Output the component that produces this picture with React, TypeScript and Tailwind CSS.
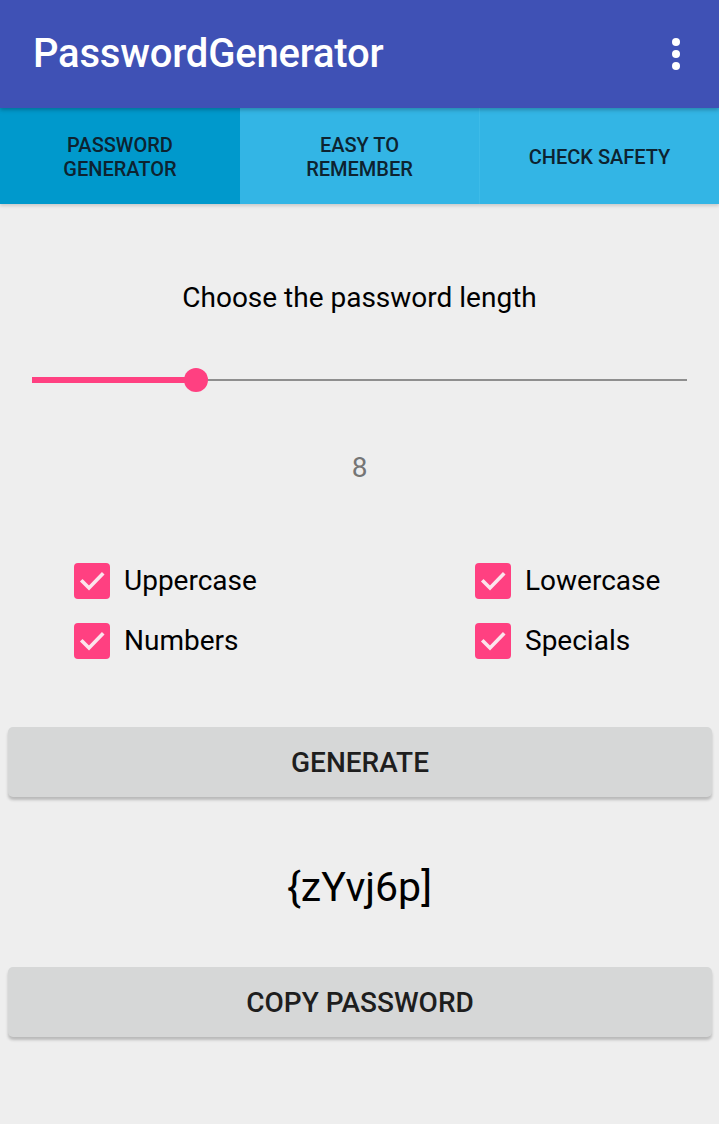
import React from "react";

function Check({ label }: { label: string }) {
  return (
    <div className="flex items-center h-[36px]">
      <div className="w-[36px] h-[36px] rounded-[4px] bg-[#FF4081] flex items-center justify-center">
        <svg width="36" height="36" viewBox="0 0 36 36">
          <path d="M8.5 18.5 L15 25 L28 11.5" fill="none" stroke="#FCE4EC" strokeWidth="3.6" strokeLinecap="square" />
        </svg>
      </div>
      <span className="ml-[14px] text-[28px] leading-[32px] text-black">{label}</span>
    </div>
  );
}

export default function App() {
  return (
    <div className="w-[719px] h-[1124px] bg-[#EEEEEE] overflow-hidden" style={{ fontFamily: "Roboto, 'Noto Sans', sans-serif" }}>
      <div className="relative z-10 h-[108px] bg-[#3F51B5] flex items-center justify-between pl-[33px] pr-[38px] shadow-[0_2px_4px_rgba(0,0,0,0.25)]">
        <span className="text-white text-[40px] font-medium leading-[48px] tracking-[-0.2px]">PasswordGenerator</span>
        <svg width="10" height="34" viewBox="0 0 10 34">
          <circle cx="5" cy="5" r="4" fill="white" />
          <circle cx="5" cy="17" r="4" fill="white" />
          <circle cx="5" cy="29" r="4" fill="white" />
        </svg>
      </div>
      <div className="relative h-[96px] grid grid-cols-[240px_240px_1fr] bg-[#33B5E5] shadow-[0_2px_3px_rgba(0,0,0,0.15)] text-[20px] font-medium leading-[24px] text-[#0D2330] text-center">
        <div className="bg-[#0099CC] flex items-center justify-center pt-[2px]">
          <span>PASSWORD<br />GENERATOR</span>
        </div>
        <div className="flex items-center justify-center pt-[2px] border-r border-[#3dbbe8]">
          <span>EASY TO<br />REMEMBER</span>
        </div>
        <div className="flex items-center justify-center pt-[2px]">
          <span>CHECK SAFETY</span>
        </div>
      </div>

      <div className="pt-[78px] flex flex-col">
        <div className="text-center text-[28px] leading-[32px] text-black">Choose the password length</div>

        <div className="mt-[54px] mx-[32px] h-[24px] relative flex items-center">
          <div className="h-[2px] w-full bg-[#8E8E8E]" />
          <div className="absolute left-0 top-[9px] h-[6px] w-[164px] bg-[#FF4081]" />
          <div className="absolute left-[152px] top-0 w-[24px] h-[24px] rounded-full bg-[#FF4081]" />
        </div>

        <div className="mt-[60px] text-center text-[28px] leading-[32px] text-[#757575]">8</div>

        <div className="mt-[79px] pl-[74px] grid grid-cols-[401px_1fr] gap-y-[24px]">
          <Check label="Uppercase" />
          <Check label="Lowercase" />
          <Check label="Numbers" />
          <Check label="Specials" />
        </div>

        <button className="mt-[68px] ml-[8px] w-[704px] h-[70px] rounded-[5px] bg-[#D6D7D7] shadow-[0_3px_3px_rgba(0,0,0,0.22)] text-[28px] font-medium text-[#1E1E1E] pt-[2px]">
          GENERATE
        </button>

        <div className="mt-[66px] text-center text-[41px] leading-[48px] text-black">{"{zYvj6p]"}</div>

        <button className="mt-[56px] ml-[8px] w-[704px] h-[70px] rounded-[5px] bg-[#D6D7D7] shadow-[0_3px_3px_rgba(0,0,0,0.22)] text-[28px] font-medium text-[#1E1E1E] pt-[2px]">
          COPY PASSWORD
        </button>
      </div>
    </div>
  );
}
